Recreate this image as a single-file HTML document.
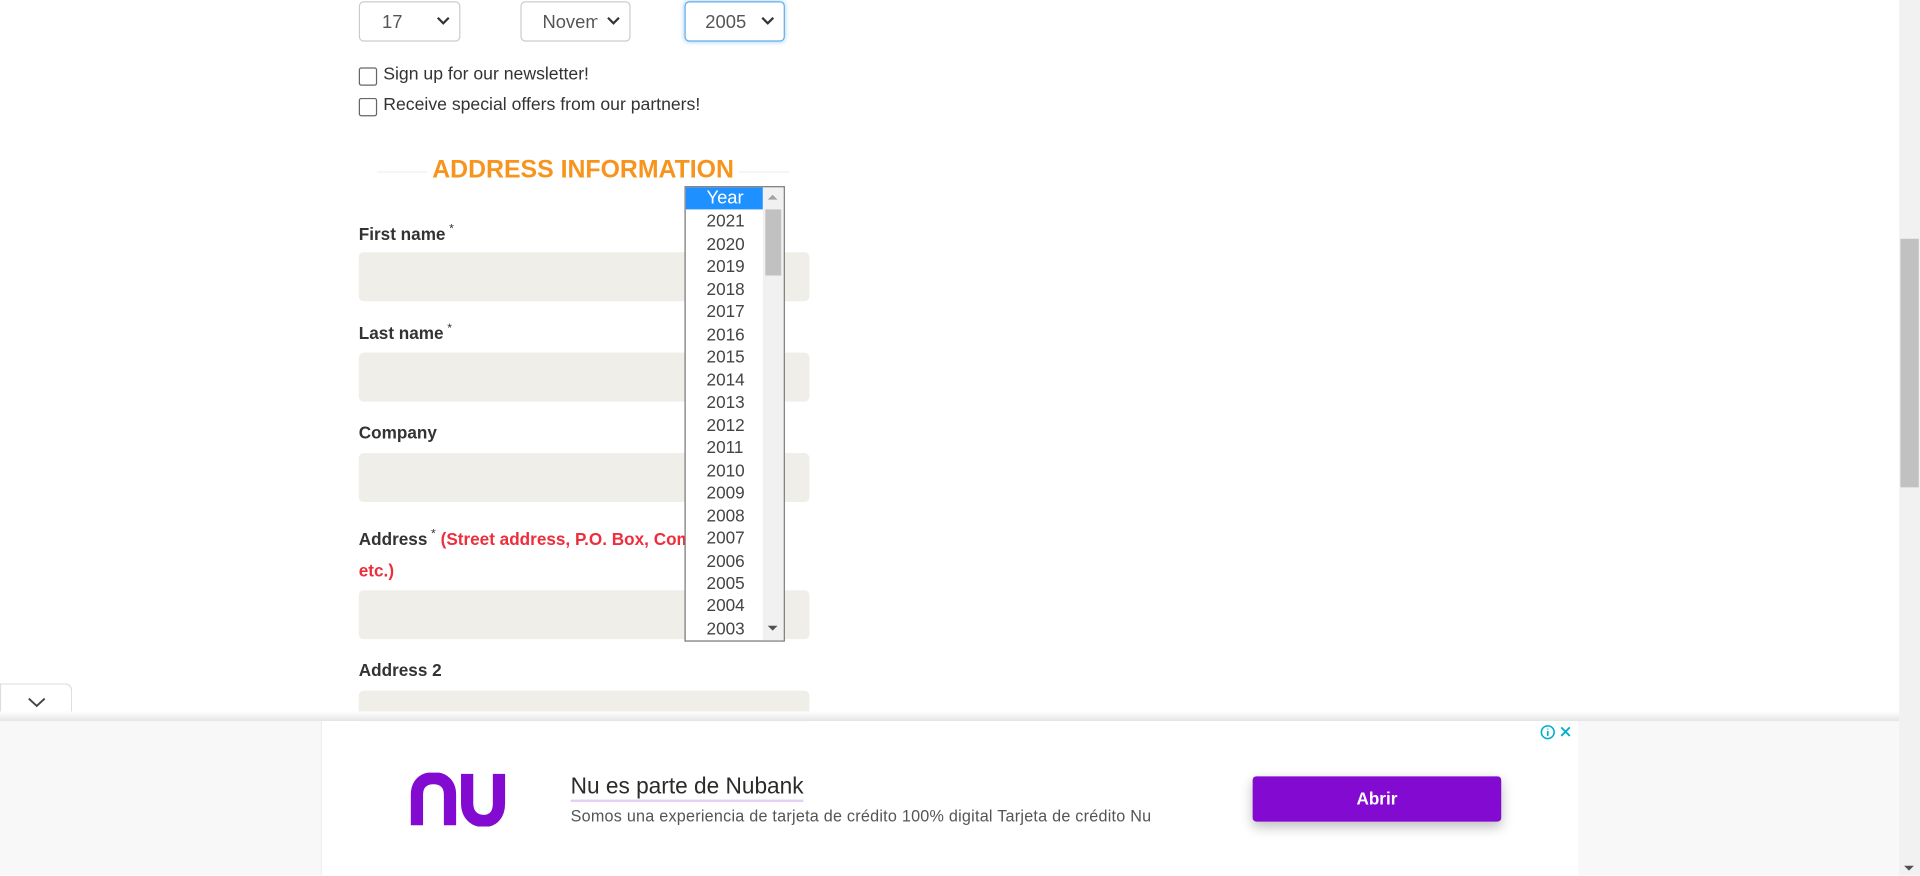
<!DOCTYPE html>
<html><head><meta charset="utf-8"><style>
html,body{margin:0;padding:0;width:1920px;height:875px;overflow:hidden;background:#fff}
#w{position:absolute;left:0;top:0;width:1568px;height:715px;transform:scale(1.22449);transform-origin:0 0;font-family:"Liberation Sans",Arial,sans-serif;color:#333}
.a{position:absolute}
.sel{position:absolute;top:1px;height:33px;border:1px solid #ccc;border-radius:4px;background:#fff;font-size:15px;color:#555;box-sizing:border-box}
.sel span{position:absolute;top:8px}
.chev{position:absolute;right:7px;top:11px;width:12px;height:8px}
.cb{position:absolute;left:293px;width:13px;height:13px;border:1px solid #666;border-radius:2px;background:#fff}
.lbl{position:absolute;left:293px;font-size:14px;font-weight:bold;color:#333}
.lbl sup{font-weight:normal;font-size:10px;vertical-align:6px;margin-left:3px}
.fld{position:absolute;left:293px;width:368px;height:40px;background:#efeee8;border-radius:4px}
.dd{position:absolute;left:559px;top:152px;width:80px;height:370px;border:1px solid #767676;background:#fff;overflow:hidden}
.dd div{height:18.47px;line-height:18.5px;font-size:14px;color:#444;padding-left:17px;width:46px}
</style></head><body><div id="w">
<div class="sel" style="left:293px;width:83px"><span style="left:18px">17</span><svg class="chev" viewBox="0 0 12 8"><path d="M1.5 1.5L6 6l4.5-4.5" stroke="#333" stroke-width="1.8" fill="none"/></svg></div>
<div class="sel" style="left:425px;width:90px"><span style="left:17px;width:45px;overflow:hidden;white-space:nowrap">November</span><svg class="chev" viewBox="0 0 12 8"><path d="M1.5 1.5L6 6l4.5-4.5" stroke="#333" stroke-width="1.8" fill="none"/></svg></div>
<div class="sel" style="left:559px;width:82px;border-color:#66afe9;box-shadow:0 0 4px rgba(102,175,233,.6)"><span style="left:16px">2005</span><svg class="chev" viewBox="0 0 12 8"><path d="M1.5 1.5L6 6l4.5-4.5" stroke="#333" stroke-width="1.8" fill="none"/></svg></div>
<div class="cb" style="top:55px"></div><div class="a" style="left:313px;top:53px;font-size:14.4px">Sign up for our newsletter!</div>
<div class="cb" style="top:80px"></div><div class="a" style="left:313px;top:78px;font-size:14.4px">Receive special offers from our partners!</div>
<div class="a" style="left:308px;top:140px;width:337px;height:1px;background:#eee"></div>
<div class="a" style="left:349px;top:128px;padding:0 4px;background:#fff;font-size:20.3px;font-weight:bold;color:#f7941d">ADDRESS INFORMATION</div>
<div class="lbl" style="top:182px">First name<sup>*</sup></div><div class="fld" style="top:206px"></div>
<div class="lbl" style="top:263px">Last name<sup>*</sup></div><div class="fld" style="top:288px"></div>
<div class="lbl" style="top:345px">Company</div><div class="fld" style="top:370px"></div>
<div class="lbl" style="top:424px;width:370px;line-height:26px">Address<sup>*</sup> <span style="color:#ee2e3c">(Street address, P.O. Box, Company name, etc.)</span></div><div class="fld" style="top:482px"></div>
<div class="lbl" style="top:539px">Address 2</div><div class="fld" style="top:564px"></div>
<div class="dd">
<div style="background:#1e90ff;color:#fff;font-size:15px">Year</div>
<div>2021</div><div>2020</div><div>2019</div><div>2018</div><div>2017</div><div>2016</div><div>2015</div><div>2014</div><div>2013</div><div>2012</div><div>2011</div><div>2010</div><div>2009</div><div>2008</div><div>2007</div><div>2006</div><div>2005</div><div>2004</div><div>2003</div>
<div class="a" style="left:63px;top:0;width:17px;height:370px;background:#f1f1f1;padding:0"></div>
<div class="a" style="left:65px;top:18px;width:13px;height:54px;background:#c1c1c1;padding:0"></div>
<svg class="a" style="left:66px;top:5px" width="10" height="6"><path d="M1 5L5 1 9 5z" fill="#a3a3a3"/></svg>
<svg class="a" style="left:66px;top:357px" width="10" height="6"><path d="M1 1L5 5 9 1z" fill="#505050"/></svg>
</div>
<!-- bottom ad -->
<div class="a" style="left:0;top:558px;width:59px;height:26px;background:#fff;border:1px solid #ddd;border-bottom:none;border-radius:0 6px 0 0;box-sizing:border-box"><svg class="a" style="left:21px;top:10px" width="16" height="9"><path d="M1.5 1.5L8 7.5l6.5-6" stroke="#444" stroke-width="1.6" fill="none"/></svg></div>
<div class="a" style="left:0;top:581px;width:1551px;height:8px;background:linear-gradient(#fff,#e4e4e4)"></div>
<div class="a" style="left:0;top:589px;width:1551px;height:126px;background:#f8f8f8"></div>
<div class="a" style="left:262px;top:589px;width:1026px;height:126px;background:#fff;border-left:1px solid #eee"></div>
<svg class="a" style="left:335px;top:631px" width="80" height="44" viewBox="0 0 80 44"><path d="M5.5 43V18C5.5 9 11 4.5 19 4.5S32.5 9 32.5 18V43" stroke="#820ad1" stroke-width="10" fill="none"/><path d="M46.5 1V25C46.5 34 52 39.5 60 39.5S72.5 34 72.5 25V1" stroke="#820ad1" stroke-width="10" fill="none"/></svg>
<div class="a" style="left:466px;top:631px;font-size:18.5px;color:#2b2b2b;border-bottom:2px solid #e6cff5;line-height:22px">Nu es parte de Nubank</div>
<div class="a" style="left:466px;top:659px;font-size:13.2px;color:#555;letter-spacing:.2px">Somos una experiencia de tarjeta de crédito 100% digital Tarjeta de crédito Nu</div>
<div class="a" style="left:1023px;top:634px;width:203px;height:37px;background:#820ad1;border-radius:3px;box-shadow:0 4px 10px rgba(0,0,0,.25);color:#fff;font-size:14px;font-weight:bold;text-align:center;line-height:36px">Abrir</div>
<svg class="a" style="left:1257px;top:591px" width="30" height="14"><circle cx="7" cy="7" r="5.2" stroke="#00aecd" stroke-width="1.3" fill="none"/><path d="M7 6v4M7 4v0.8" stroke="#00aecd" stroke-width="1.4"/><path d="M18 3l7 7M25 3l-7 7" stroke="#00aecd" stroke-width="1.5"/></svg>
<!-- page scrollbar -->
<div class="a" style="left:1551px;top:0;width:17px;height:715px;background:#f1f1f1"></div>
<div class="a" style="left:1552px;top:195px;width:15px;height:203px;background:#c1c1c1"></div>
<svg class="a" style="left:1554px;top:706px" width="10" height="6"><path d="M1 1L5 5 9 1z" fill="#505050"/></svg>
</div></body></html>
